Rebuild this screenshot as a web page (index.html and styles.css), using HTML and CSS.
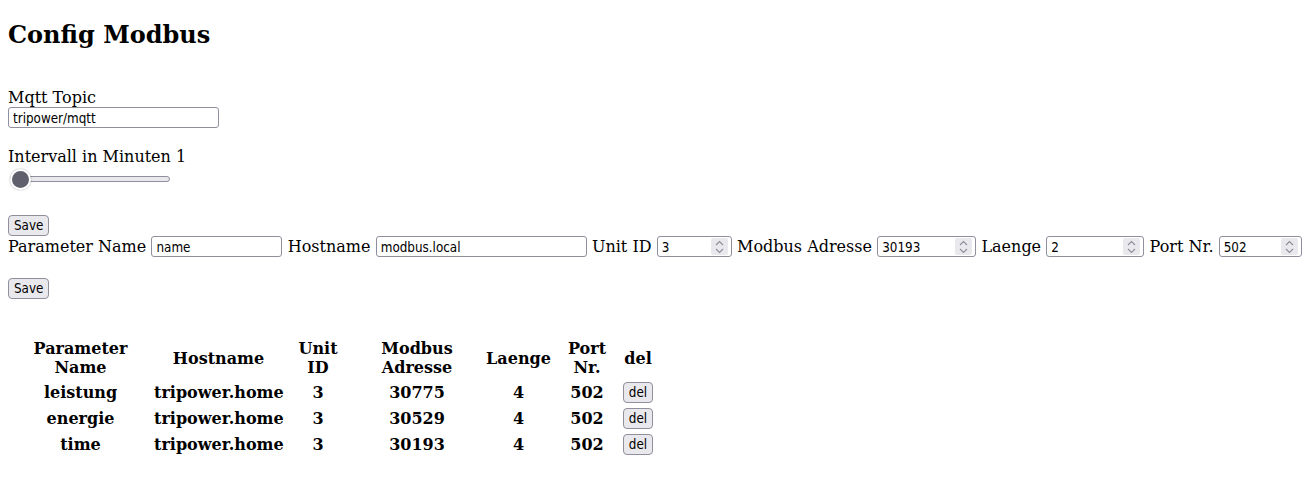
FILE: index.html
```html
<!DOCTYPE html>
<html>
<head>
<meta charset="utf-8">
<title>Config Modbus</title>
<link rel="stylesheet" href="styles.css">
</head>
<body>
<h1 class="title">Config Modbus</h1>
<form class="config">
  <label class="lbl" for="topic">Mqtt Topic</label>
  <input class="txt wide" type="text" id="topic" value="tripower/mqtt">
  <label class="lbl gap" for="interval">Intervall in Minuten <span>1</span></label>
  <input class="range" type="range" id="interval" min="1" max="60" value="1">
  <button class="btn save-a" type="button">Save</button>
</form>
<form class="param">
  <div class="row">
    <label class="lbl">Parameter Name</label>
    <input class="txt w-name" type="text" value="name">
    <label class="lbl">Hostname</label>
    <input class="txt wide" type="text" value="modbus.local">
    <label class="lbl">Unit ID</label>
    <span class="numwrap"><input class="txt num w-unit" type="number" value="3"><span class="spin"><svg width="9" height="14" viewBox="0 0 9 14"><path d="M1 5 L4.5 1.5 L8 5 M1 9 L4.5 12.5 L8 9" fill="none" stroke="#8c8c99" stroke-width="1.1"/></svg></span></span>
    <label class="lbl">Modbus Adresse</label>
    <span class="numwrap"><input class="txt num w-addr" type="number" value="30193"><span class="spin"><svg width="9" height="14" viewBox="0 0 9 14"><path d="M1 5 L4.5 1.5 L8 5 M1 9 L4.5 12.5 L8 9" fill="none" stroke="#8c8c99" stroke-width="1.1"/></svg></span></span>
    <label class="lbl">Laenge</label>
    <span class="numwrap"><input class="txt num w-len" type="number" value="2"><span class="spin"><svg width="9" height="14" viewBox="0 0 9 14"><path d="M1 5 L4.5 1.5 L8 5 M1 9 L4.5 12.5 L8 9" fill="none" stroke="#8c8c99" stroke-width="1.1"/></svg></span></span>
    <label class="lbl">Port Nr.</label>
    <span class="numwrap"><input class="txt num w-port" type="number" value="502"><span class="spin"><svg width="9" height="14" viewBox="0 0 9 14"><path d="M1 5 L4.5 1.5 L8 5 M1 9 L4.5 12.5 L8 9" fill="none" stroke="#8c8c99" stroke-width="1.1"/></svg></span></span>
  </div>
  <button class="btn save-b" type="button">Save</button>
</form>
<table class="list">
  <tr class="head">
    <th class="c1">Parameter Name</th><th class="c2">Hostname</th><th class="c3">Unit ID</th><th class="c4">Modbus Adresse</th><th class="c5">Laenge</th><th class="c6">Port Nr.</th><th class="c7">del</th>
  </tr>
  <tr><th>leistung</th><th>tripower.home</th><th>3</th><th>30775</th><th>4</th><th>502</th><th><button class="btn" type="button">del</button></th></tr>
  <tr><th>energie</th><th>tripower.home</th><th>3</th><th>30529</th><th>4</th><th>502</th><th><button class="btn" type="button">del</button></th></tr>
  <tr><th>time</th><th>tripower.home</th><th>3</th><th>30193</th><th>4</th><th>502</th><th><button class="btn" type="button">del</button></th></tr>
</table>
</body>
</html>
```
FILE: styles.css
```css
body {
  margin: 8px;
  font-family: "DejaVu Serif", serif;
  font-size: 16px;
  color: #000;
  background: #fff;
}
.title {
  font-size: 24px;
  line-height: 28px;
  margin: 13px 0 0;
  font-weight: bold;
}
.config {
  margin: 39px 0 0;
  display: flex;
  flex-direction: column;
  align-items: flex-start;
}
.lbl {
  line-height: 19px;
  white-space: nowrap;
}
.gap {
  margin-top: 19px;
}
.txt {
  box-sizing: border-box;
  height: 21px;
  margin: 0;
  padding: 1px 4px 0;
  border: 1px solid #8f8f9d;
  border-radius: 3px;
  background: #fff;
  font-family: "DejaVu Sans Condensed", "DejaVu Sans", sans-serif;
  font-stretch: condensed;
  font-size: 13.33px;
  color: #000;
}
.wide { width: 211px; }
.w-name { width: 131px; }
.w-unit { width: 75px; }
.w-addr { width: 99px; }
.w-len { width: 98px; }
.w-port { width: 83px; }
.num {
  -moz-appearance: textfield;
  appearance: textfield;
}
.num::-webkit-inner-spin-button,
.num::-webkit-outer-spin-button {
  -webkit-appearance: none;
  margin: 0;
}
.numwrap {
  position: relative;
  display: inline-flex;
}
.spin {
  position: absolute;
  right: 4px;
  top: 2px;
  width: 17px;
  height: 17px;
  background: #e9e9ed;
  border-radius: 2px;
  display: flex;
  align-items: center;
  justify-content: center;
}
.range {
  -webkit-appearance: none;
  appearance: none;
  width: 160px;
  height: 20px;
  margin: 3px 0 0 2px;
  padding: 0;
  background: transparent;
}
.range::-webkit-slider-runnable-track {
  height: 6px;
  box-sizing: border-box;
  background: #e9e9ed;
  border: 1px solid #8f8f9d;
  border-radius: 3px;
}
.range::-webkit-slider-thumb {
  -webkit-appearance: none;
  box-sizing: border-box;
  width: 21px;
  height: 21px;
  margin-top: -8.5px;
  margin-left: -1px;
  border-radius: 50%;
  background: #5f5f6d;
  border: 2px solid #fff;
  box-shadow: 0 0 2px rgba(0,0,0,0.35);
}
.btn {
  box-sizing: border-box;
  height: 21px;
  margin: 0;
  padding: 1px 5px 0;
  border: 1px solid #8f8f9d;
  border-radius: 4px;
  background: #e9e9ed;
  font-family: "DejaVu Sans Condensed", "DejaVu Sans", sans-serif;
  font-stretch: condensed;
  font-size: 13.33px;
  color: #000;
  line-height: 18px;
}
.save-a {
  margin-top: 26px;
}
.param {
  margin: 0;
}
.row {
  display: flex;
  align-items: center;
  gap: 5.25px;
  height: 21px;
}
.save-b {
  display: block;
  margin-top: 21px;
}
.list {
  margin-top: 37px;
  border-spacing: 2px;
  table-layout: fixed;
  width: 649px;
}
.list th {
  box-sizing: border-box;
  padding: 1px;
  text-align: center;
  vertical-align: middle;
  font-weight: bold;
}
.list tr:not(.head) th {
  height: 24px;
}
.c1 { width: 141px; }
.c2 { width: 131px; }
.c3 { width: 64px; }
.c4 { width: 130px; }
.c5 { width: 69px; }
.c6 { width: 64px; }
.c7 { width: 34px; }
```
